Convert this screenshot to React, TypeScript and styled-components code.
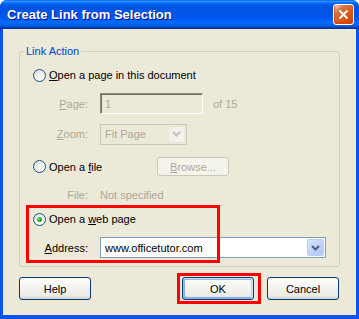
import styled, { createGlobalStyle } from "styled-components";

const GlobalStyle = createGlobalStyle`
  html, body {
    margin: 0;
    padding: 0;
    background: #ffffff;
  }
  body {
    font-family: "Liberation Sans", Arial, sans-serif;
    font-size: 11px;
    color: #000;
  }
  * {
    box-sizing: border-box;
  }
`;

const DISABLED = "#aca899";

const Window = styled.div`
  width: 359px;
  height: 319px;
  display: flex;
  flex-direction: column;
  border-radius: 7px 7px 0 0;
  overflow: hidden;
  background: #0831d9;
`;

const TitleBar = styled.div`
  height: 29px;
  flex-shrink: 0;
  display: flex;
  align-items: center;
  justify-content: space-between;
  padding: 0 5px 0 7px;
  background: linear-gradient(
    180deg,
    #0058ee 0%,
    #3593ff 4%,
    #288eff 6%,
    #127dff 8%,
    #036ffc 10%,
    #0262ee 14%,
    #0057e5 20%,
    #0054e3 24%,
    #0055eb 56%,
    #005bf5 66%,
    #026afe 76%,
    #0062ef 86%,
    #0052d6 92%,
    #0040ab 94%,
    #003092 100%
  );
`;

const Title = styled.span`
  color: #fff;
  font-weight: bold;
  font-size: 13px;
  text-shadow: 1px 1px #0f1089;
`;

const CloseButton = styled.div`
  width: 21px;
  height: 21px;
  border: 1px solid #fff;
  border-radius: 3px;
  display: flex;
  align-items: center;
  justify-content: center;
  background: radial-gradient(
    circle at 90% 90%,
    #cc4600 0%,
    #dc6527 55%,
    #cd7546 70%,
    #ffccb2 90%,
    #fff 100%
  );
  box-shadow: inset 0 -1px 2px 1px #da4600;
`;

const Frame = styled.div`
  flex: 1;
  background: #ece9d8;
  border-style: solid;
  border-color: #0a55ea;
  border-width: 0 3px 4px 3px;
  padding: 0 16px 0 16px;
  display: flex;
  flex-direction: column;
`;

const Group = styled.div`
  margin-top: 22px;
  border: 1px solid #d0d0bf;
  border-radius: 3px;
  padding: 0 13px 8px 13px;
  display: flex;
  flex-direction: column;
`;

const Legend = styled.span`
  align-self: flex-start;
  margin: -7px 0 0 -9px;
  padding: 0 2px;
  line-height: 13px;
  height: 13px;
  color: #0046d5;
  background: #ece9d8;
`;

const Row = styled.div<{ $mt: number; $h: number }>`
  display: flex;
  align-items: center;
  margin-top: ${(p) => p.$mt}px;
  height: ${(p) => p.$h}px;
`;

const RadioOption = styled.div<{ $w?: number }>`
  display: flex;
  align-items: center;
  gap: 3px;
  width: ${(p) => (p.$w ? `${p.$w}px` : "auto")};
  flex-shrink: 0;
`;

const Radio = styled.span<{ $checked?: boolean }>`
  width: 13px;
  height: 13px;
  border-radius: 50%;
  border: 1px solid #1c5180;
  background: linear-gradient(135deg, #dcdcd7 0%, #f2f2ef 50%, #ffffff 100%);
  display: flex;
  align-items: center;
  justify-content: center;
  flex-shrink: 0;
  &::after {
    content: "";
    width: 5px;
    height: 5px;
    border-radius: 50%;
    background: ${(p) =>
      p.$checked
        ? "radial-gradient(circle at 35% 35%, #6fe06f 0%, #21a121 60%, #1a7a1a 100%)"
        : "transparent"};
  }
`;

const Text = styled.span<{ $disabled?: boolean }>`
  color: ${(p) => (p.$disabled ? DISABLED : "#000")};
  white-space: nowrap;
`;

const FieldLabel = styled.span<{ $disabled?: boolean }>`
  width: 55px;
  text-align: right;
  margin-right: 12px;
  flex-shrink: 0;
  color: ${(p) => (p.$disabled ? DISABLED : "#000")};
`;

const SunkenInput = styled.div<{ $w: number }>`
  width: ${(p) => p.$w}px;
  height: 21px;
  border-style: solid;
  border-width: 1px;
  border-color: #8d8b80 #ffffff #ffffff #8d8b80;
  box-shadow: inset 1px 1px #716f64;
  display: flex;
  align-items: center;
  padding-left: 4px;
  color: ${DISABLED};
`;

const Suffix = styled.span`
  margin-left: 10px;
  color: ${DISABLED};
`;

const Combo = styled.div<{ $w: number; $disabled?: boolean }>`
  width: ${(p) => p.$w}px;
  height: 21px;
  border: 1px solid ${(p) => (p.$disabled ? "#c9c7ba" : "#7f9db9")};
  background: ${(p) => (p.$disabled ? "#ece9d8" : "#fff")};
  display: flex;
  align-items: center;
  justify-content: space-between;
  padding: 1px;
`;

const ComboText = styled.span<{ $disabled?: boolean }>`
  padding-left: 3px;
  color: ${(p) => (p.$disabled ? DISABLED : "#000")};
`;

const ComboArrow = styled.div<{ $disabled?: boolean }>`
  width: 17px;
  height: 17px;
  border-radius: 2px;
  display: flex;
  align-items: center;
  justify-content: center;
  border: 1px solid ${(p) => (p.$disabled ? "#e8e6de" : "#bccef5")};
  background: ${(p) =>
    p.$disabled
      ? "#f2f1ec"
      : "linear-gradient(135deg, #dbe6fe 0%, #c1d3fb 50%, #b1c6f6 100%)"};
`;

const Button = styled.div<{ $w?: number; $disabled?: boolean; $default?: boolean }>`
  width: ${(p) => p.$w ?? 72}px;
  height: 23px;
  border: 1px solid ${(p) => (p.$disabled ? "#c9c7ba" : "#003c74")};
  border-radius: 3px;
  display: flex;
  align-items: center;
  justify-content: center;
  flex-shrink: 0;
  color: ${(p) => (p.$disabled ? DISABLED : "#000")};
  background: ${(p) =>
    p.$disabled
      ? "#f5f4ea"
      : "linear-gradient(180deg, #ffffff 0%, #f4f4f0 40%, #ecebe6 86%, #d6d0c5 100%)"};
  box-shadow: ${(p) =>
    p.$default
      ? "inset -1px 1px #cee7ff, inset 1px 2px #98b8ea, inset -2px 2px #bcd4f6, inset 1px -1px #89ade4, inset 2px -2px #89ade4"
      : "none"};
`;

const BrowseButton = styled(Button)`
  height: 19px;
`;

const WebSection = styled.div`
  position: relative;
  display: flex;
  flex-direction: column;
`;

const Highlight = styled.div<{ $top: number; $left: number; $w: number; $h: number }>`
  position: absolute;
  top: ${(p) => p.$top}px;
  left: ${(p) => p.$left}px;
  width: ${(p) => p.$w}px;
  height: ${(p) => p.$h}px;
  border: 3px solid #ff0000;
  pointer-events: none;
`;

const ButtonBar = styled.div`
  margin-top: 10px;
  display: flex;
  align-items: center;
  padding-right: 1px;
`;

const Spacer = styled.div`
  flex: 1;
`;

const ButtonSlot = styled.div<{ $mr?: number }>`
  position: relative;
  margin-right: ${(p) => p.$mr ?? 0}px;
`;

const Key = styled.u``;

function Chevron({ color }: { color: string }) {
  return (
    <svg width="9" height="6" viewBox="0 0 9 6">
      <path d="M1 1 L4.5 4.5 L8 1" fill="none" stroke={color} strokeWidth="2" />
    </svg>
  );
}

function CloseGlyph() {
  return (
    <svg width="11" height="11" viewBox="0 0 11 11">
      <path d="M1.5 1.5 L9.5 9.5 M9.5 1.5 L1.5 9.5" stroke="#fff" strokeWidth="2" />
    </svg>
  );
}

export default function App() {
  return (
    <>
      <GlobalStyle />
      <Window>
        <TitleBar>
          <Title>Create Link from Selection</Title>
          <CloseButton>
            <CloseGlyph />
          </CloseButton>
        </TitleBar>
        <Frame>
          <Group>
            <Legend>Link Action</Legend>

            <Row $mt={8} $h={18}>
              <RadioOption>
                <Radio />
                <Text>
                  <Key>O</Key>pen a page in this document
                </Text>
              </RadioOption>
            </Row>

            <Row $mt={9} $h={21}>
              <FieldLabel $disabled>
                <Key>P</Key>age:
              </FieldLabel>
              <SunkenInput $w={103}>1</SunkenInput>
              <Suffix>of 15</Suffix>
            </Row>

            <Row $mt={10} $h={20}>
              <FieldLabel $disabled>
                <Key>Z</Key>oom:
              </FieldLabel>
              <Combo $w={87} $disabled>
                <ComboText $disabled>Fit Page</ComboText>
                <ComboArrow $disabled>
                  <Chevron color="#c5c2b8" />
                </ComboArrow>
              </Combo>
            </Row>

            <Row $mt={13} $h={19}>
              <RadioOption $w={124}>
                <Radio />
                <Text>
                  Open a <Key>f</Key>ile
                </Text>
              </RadioOption>
              <BrowseButton $w={72} $disabled>
                <span>
                  <Key>B</Key>rowse...
                </span>
              </BrowseButton>
            </Row>

            <Row $mt={12} $h={14}>
              <FieldLabel $disabled>File:</FieldLabel>
              <Text $disabled>Not specified</Text>
            </Row>

            <WebSection>
              <Row $mt={8} $h={18}>
                <RadioOption>
                  <Radio $checked />
                  <Text>
                    Open a <Key>w</Key>eb page
                  </Text>
                </RadioOption>
              </Row>
              <Row $mt={9} $h={21}>
                <FieldLabel>
                  <Key>A</Key>ddress:
                </FieldLabel>
                <Combo $w={226}>
                  <ComboText>www.officetutor.com</ComboText>
                  <ComboArrow>
                    <Chevron color="#4d6185" />
                  </ComboArrow>
                </Combo>
              </Row>
              <Highlight $top={3} $left={-7} $w={194} $h={58} />
            </WebSection>
          </Group>

          <ButtonBar>
            <Button>Help</Button>
            <Spacer />
            <ButtonSlot $mr={13}>
              <Button $default>OK</Button>
              <Highlight $top={-4} $left={-5} $w={84} $h={31} />
            </ButtonSlot>
            <Button>Cancel</Button>
          </ButtonBar>
        </Frame>
      </Window>
    </>
  );
}
